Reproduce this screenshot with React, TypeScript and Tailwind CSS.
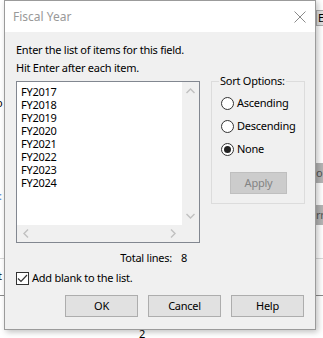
import React from 'react';

const font = { fontFamily: '"Noto Sans", "Open Sans", sans-serif' };

const items = ['FY2017', 'FY2018', 'FY2019', 'FY2020', 'FY2021', 'FY2022', 'FY2023', 'FY2024'];

function Radio({ label, checked }: { label: string; checked?: boolean }) {
  return (
    <div className="flex items-center h-[23px] gap-[3px]">
      <span className="shrink-0 w-[13px] h-[13px] rounded-full border border-[#333] bg-white flex items-center justify-center">
        {checked && <span className="w-[7px] h-[7px] rounded-full bg-[#222]" />}
      </span>
      <span className="whitespace-nowrap">{label}</span>
    </div>
  );
}

function Button({ label, disabled }: { label: string; disabled?: boolean }) {
  return (
    <div
      className={
        'h-[22px] flex items-center justify-center border ' +
        (disabled
          ? 'w-[57px] border-[#bfbfbf] bg-[#cccccc] text-[#838383]'
          : 'w-[73px] border-[#adadad] bg-[#e1e1e1] text-black')
      }
    >
      {label}
    </div>
  );
}

export default function App() {
  return (
    <div
      className="relative w-[323px] h-[338px] bg-white overflow-hidden text-[11px] tracking-[-0.25px] text-black"
      style={font}
    >
      {/* things behind the dialog */}
      <div className="absolute left-[316px] top-[10px] w-[20px] h-[16px] border border-[#adadad] bg-[#e1e1e1] leading-[14px] pl-[1px]">Ed</div>
      <div className="absolute left-[316px] top-[163px] w-[20px] h-[20px] bg-[#b4b4b4] text-[#555] leading-[20px]">or</div>
      <div className="absolute left-[316px] top-[205px] w-[20px] h-[20px] bg-[#b4b4b4] text-[#555] leading-[20px]">rr</div>
      <div className="absolute left-0 top-[258px] w-full border-t border-[#d9d9d9]" />
      <div className="absolute left-0 top-[295px] w-full border-t border-[#8a8a8a]" />
      <div className="absolute left-[-4px] top-[95px] leading-[16px]">o</div>
      <div className="absolute left-[-1px] top-[188px] text-[#3c7fd0] leading-[16px]">:</div>
      <div className="absolute left-[-2px] top-[268px] leading-[16px]">t</div>
      <div className="absolute left-[139px] top-[326px] leading-[16px]">2</div>

      {/* dialog */}
      <div className="absolute left-[4px] top-0 w-[312px] h-[330px] border border-[#9b9b9b] bg-[#f0f0f0] shadow-[2px_2px_6px_rgba(0,0,0,0.25)] flex flex-col">
        <div className="h-[31px] bg-white flex items-center justify-between pl-[8px] pr-[7px]">
          <span className="text-[12px] tracking-normal text-[#999999]">Fiscal Year</span>
          <svg width="12" height="12" viewBox="0 0 12 12" className="mr-[2px]">
            <path d="M0.5 0.5 L11.5 11.5 M11.5 0.5 L0.5 11.5" stroke="#8a8a8a" strokeWidth="1" />
          </svg>
        </div>

        <div className="flex flex-col pl-[11px] pr-[10px] pt-[9px]">
          <div className="leading-[18px]">Enter the list of items for this field.</div>
          <div className="leading-[18px]">Hit Enter after each item.</div>

          <div className="flex mt-[4px] gap-[11px]">
            {/* list box */}
            <div className="w-[184px] h-[162px] border border-[#828790] bg-white flex flex-col">
              <div className="flex flex-1">
                <div className="flex-1 pl-[4px] pt-[3px] leading-[13px]">
                  {items.map((it) => (
                    <div key={it}>{it}</div>
                  ))}
                </div>
                <div className="w-[17px] bg-[#f0f0f0] flex flex-col items-center justify-between py-[6px]">
                  <svg width="9" height="6" viewBox="0 0 9 6">
                    <path d="M0.5 5 L4.5 1 L8.5 5" stroke="#c0c0c0" strokeWidth="1.4" fill="none" />
                  </svg>
                  <svg width="9" height="6" viewBox="0 0 9 6">
                    <path d="M0.5 1 L4.5 5 L8.5 1" stroke="#c0c0c0" strokeWidth="1.4" fill="none" />
                  </svg>
                </div>
              </div>
              <div className="h-[17px] flex">
                <div className="flex-1 bg-[#f0f0f0] flex items-center justify-between px-[6px]">
                  <svg width="6" height="9" viewBox="0 0 6 9">
                    <path d="M5 0.5 L1 4.5 L5 8.5" stroke="#c0c0c0" strokeWidth="1.4" fill="none" />
                  </svg>
                  <svg width="6" height="9" viewBox="0 0 6 9">
                    <path d="M1 0.5 L5 4.5 L1 8.5" stroke="#c0c0c0" strokeWidth="1.4" fill="none" />
                  </svg>
                </div>
                <div className="w-[17px] bg-[#f0f0f0]" />
              </div>
            </div>

            {/* sort options */}
            <div className="relative w-[94px] h-[123px] border border-[#dcdcdc] px-[9px] pt-[10px] flex flex-col">
              <span className="absolute left-[7px] top-[-9px] px-[1px] bg-[#f0f0f0] leading-[16px]">Sort Options:</span>
              <Radio label="Ascending" />
              <Radio label="Descending" />
              <Radio label="None" checked />
              <div className="mt-[11px] ml-[9px]">
                <Button label="Apply" disabled />
              </div>
            </div>
          </div>

          <div className="flex w-[184px] justify-end pr-[13px] mt-[6px] leading-[18px] gap-[9px]">
            <span>Total lines:</span>
            <span>8</span>
          </div>

          <div className="flex items-center gap-[3px] mt-[3px] h-[16px]">
            <span className="shrink-0 w-[13px] h-[13px] border border-[#333] bg-white flex items-center justify-center">
              <svg width="11" height="9" viewBox="0 0 11 9">
                <path d="M1 4.5 L4 7.5 L10 1" stroke="#333" strokeWidth="1.2" fill="none" />
              </svg>
            </span>
            <span>Add blank to the list.</span>
          </div>

          <div className="flex justify-end gap-[10px] mt-[9px] pr-[1px]">
            <Button label="OK" />
            <Button label="Cancel" />
            <Button label="Help" />
          </div>
        </div>
      </div>
    </div>
  );
}
